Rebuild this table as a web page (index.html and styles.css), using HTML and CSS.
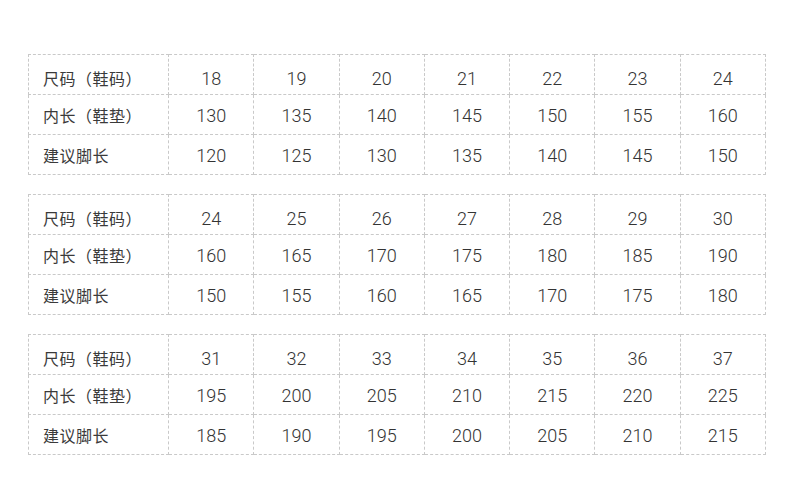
FILE: index.html
```html
<!DOCTYPE html>
<html lang="zh-CN">
<head>
<meta charset="utf-8">
<title>尺码表</title>
<link rel="stylesheet" href="styles.css">
</head>
<body>
<div class="page">
  <table class="size-table">
    <colgroup><col class="c-label"><col span="7" class="c-num"></colgroup>
    <tr class="first"><th>尺码<span class="paren">（</span>鞋码<span class="paren">）</span></th><td>18</td><td>19</td><td>20</td><td>21</td><td>22</td><td>23</td><td>24</td></tr>
    <tr><th>内长<span class="paren">（</span>鞋垫<span class="paren">）</span></th><td>130</td><td>135</td><td>140</td><td>145</td><td>150</td><td>155</td><td>160</td></tr>
    <tr><th>建议脚长</th><td>120</td><td>125</td><td>130</td><td>135</td><td>140</td><td>145</td><td>150</td></tr>
  </table>
  <table class="size-table">
    <colgroup><col class="c-label"><col span="7" class="c-num"></colgroup>
    <tr class="first"><th>尺码<span class="paren">（</span>鞋码<span class="paren">）</span></th><td>24</td><td>25</td><td>26</td><td>27</td><td>28</td><td>29</td><td>30</td></tr>
    <tr><th>内长<span class="paren">（</span>鞋垫<span class="paren">）</span></th><td>160</td><td>165</td><td>170</td><td>175</td><td>180</td><td>185</td><td>190</td></tr>
    <tr><th>建议脚长</th><td>150</td><td>155</td><td>160</td><td>165</td><td>170</td><td>175</td><td>180</td></tr>
  </table>
  <table class="size-table">
    <colgroup><col class="c-label"><col span="7" class="c-num"></colgroup>
    <tr class="first"><th>尺码<span class="paren">（</span>鞋码<span class="paren">）</span></th><td>31</td><td>32</td><td>33</td><td>34</td><td>35</td><td>36</td><td>37</td></tr>
    <tr><th>内长<span class="paren">（</span>鞋垫<span class="paren">）</span></th><td>195</td><td>200</td><td>205</td><td>210</td><td>215</td><td>220</td><td>225</td></tr>
    <tr><th>建议脚长</th><td>185</td><td>190</td><td>195</td><td>200</td><td>205</td><td>210</td><td>215</td></tr>
  </table>
</div>
</body>
</html>
```
FILE: styles.css
```css
html, body {
  margin: 0;
  padding: 0;
  background: #ffffff;
}
.page {
  padding: 54px 0 0 28px;
  display: flex;
  flex-direction: column;
  gap: 19px;
}
.size-table {
  border-collapse: collapse;
  table-layout: fixed;
  width: 738px;
  color: #333333;
}
.c-label { width: 140px; }
.size-table th,
.size-table td {
  border: 1px dashed #c9c9c9;
  height: 40px;
  padding: 0;
  box-sizing: border-box;
  vertical-align: middle;
}
.size-table tr {
  height: 40px;
}
.size-table th {
  text-align: left;
  font-weight: normal;
  padding-left: 14px;
  padding-top: 1px;
  font-family: "Noto Sans CJK SC", sans-serif;
  font-size: 16px;
  letter-spacing: 0.5px;
  color: #3a3a3a;
}
.paren {
  font-family: "Noto Sans CJK TC", "Noto Sans CJK SC", sans-serif;
}
.size-table td {
  text-align: center;
  font-family: "Roboto", "Liberation Sans", Arial, sans-serif;
  font-weight: 300;
  font-size: 18px;
  padding-top: 1px;
}
.size-table tr.first th,
.size-table tr.first td {
  padding-top: 7px;
}
```
